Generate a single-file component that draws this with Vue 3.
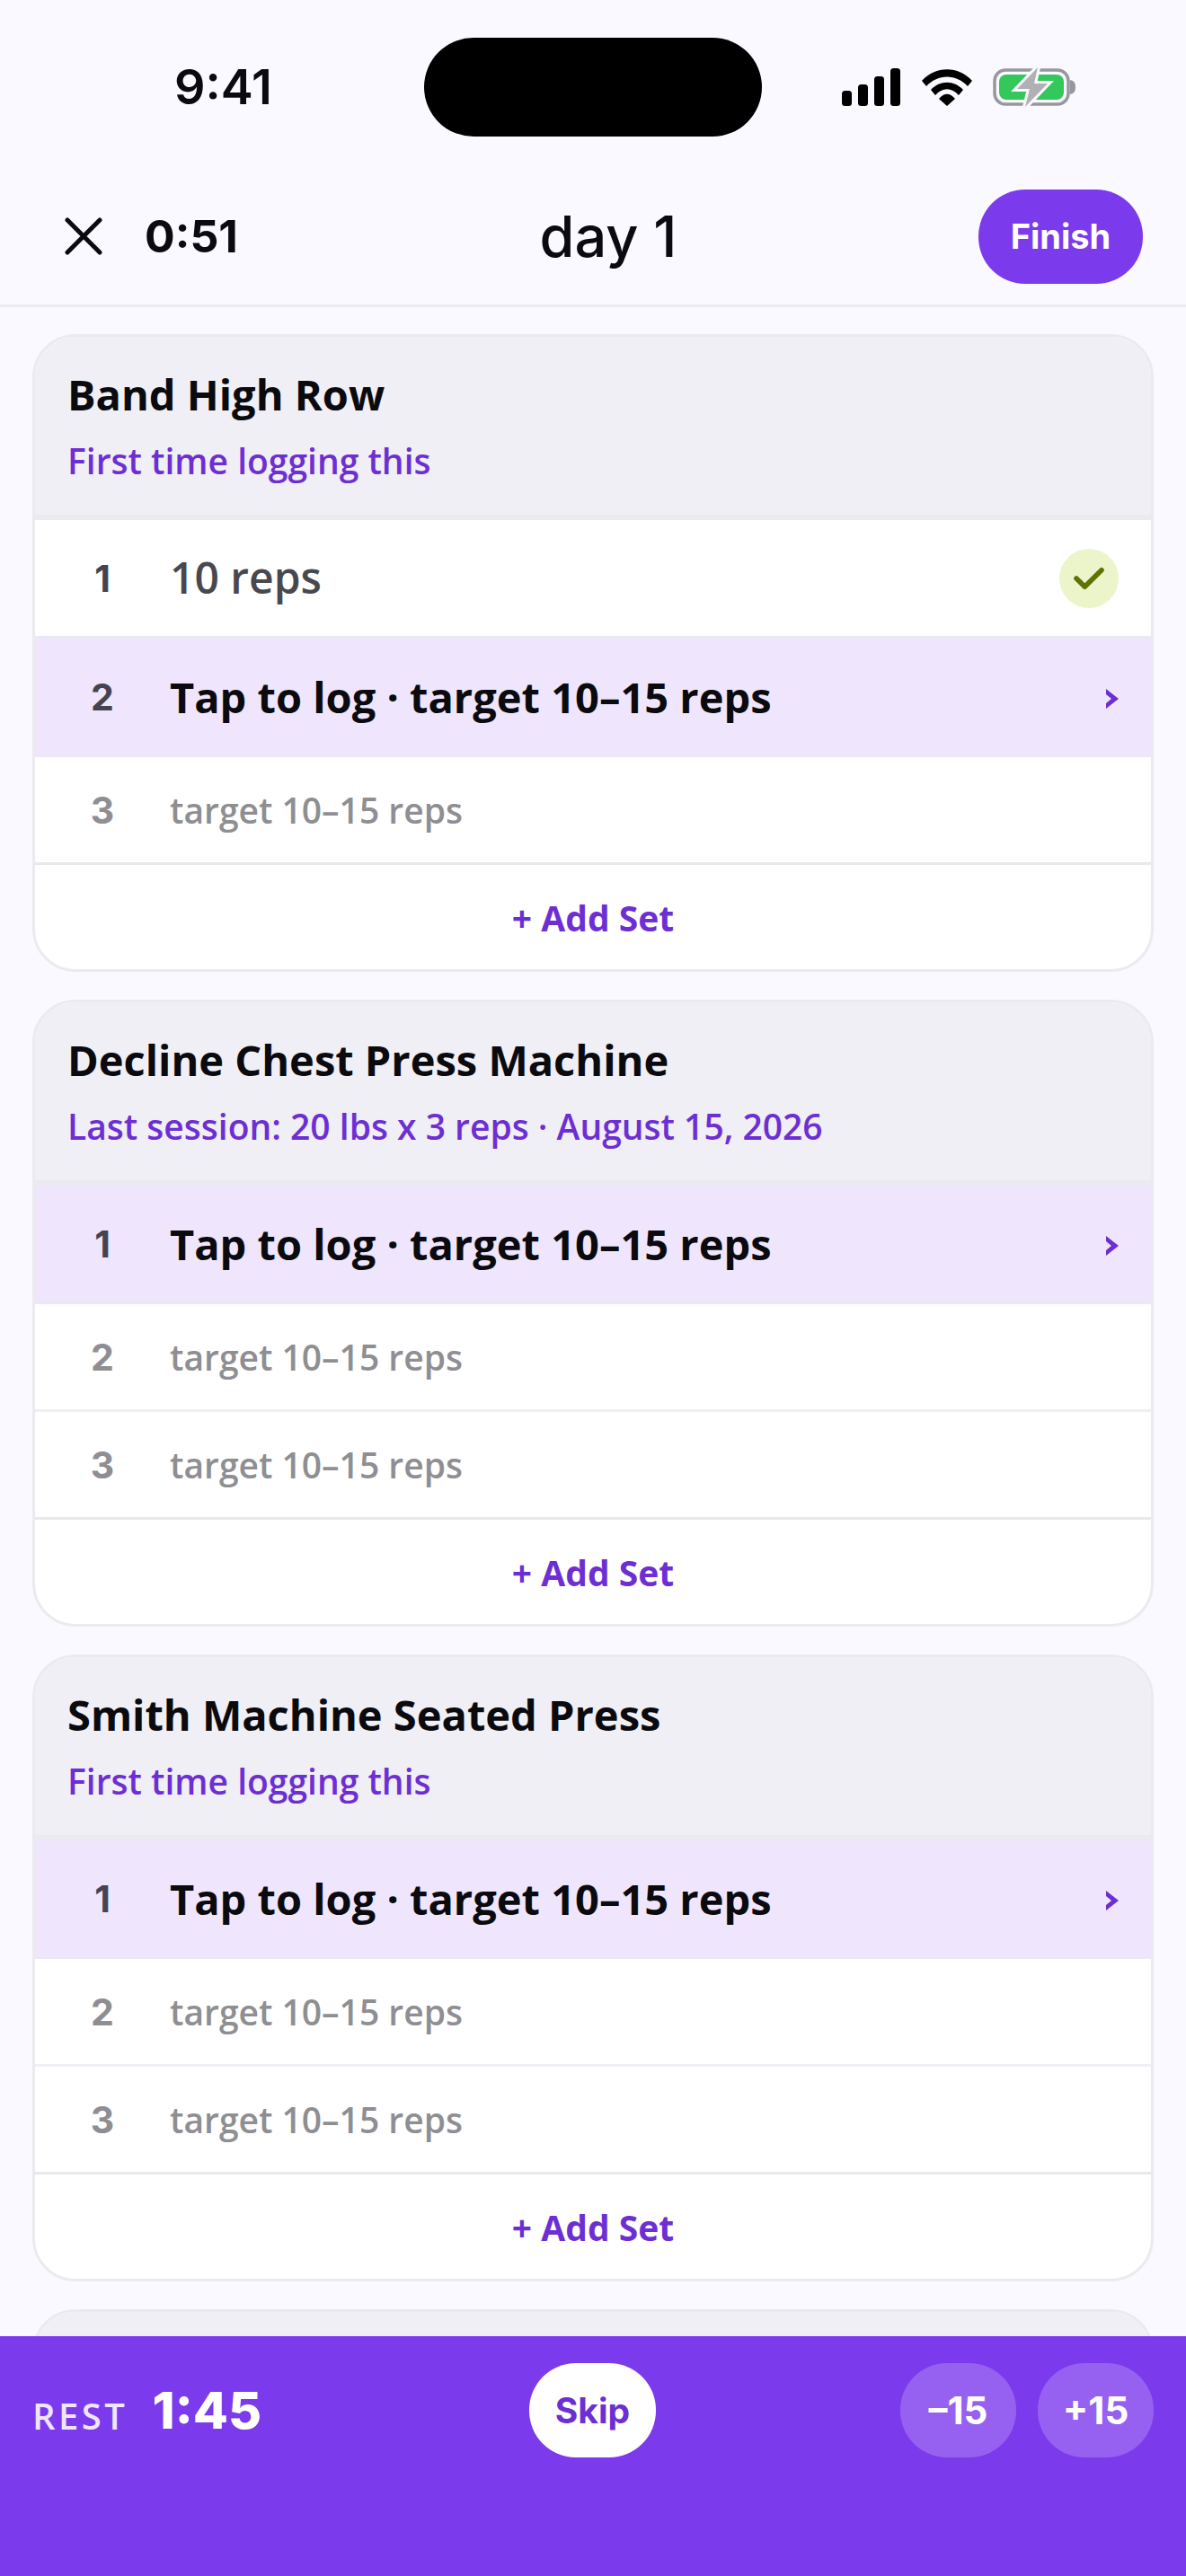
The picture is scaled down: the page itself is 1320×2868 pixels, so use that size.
<template>
  <div class="screen">
    <!-- status bar -->
    <div class="status">
      <span class="clock">9:41</span>
      <div class="island"></div>
      <div class="status-icons">
        <svg width="66" height="42" viewBox="0 0 66 42">
          <rect x="0" y="25" width="11" height="17" rx="3.5" />
          <rect x="18" y="18" width="11" height="24" rx="3.5" />
          <rect x="36" y="9" width="11" height="33" rx="3.5" />
          <rect x="54" y="0" width="11" height="42" rx="3.5" />
        </svg>
        <svg width="58" height="42" viewBox="0 0 58 42">
          <path d="M1 14 C16 -3 42 -3 57 14 L52 20 C39 6 19 6 6 20 Z" />
          <path d="M11 24 C21 13 37 13 47 24 L42 30 C34 21 24 21 16 30 Z" />
          <path d="M20 34 C26 27 32 27 38 34 L29 42 Z" />
        </svg>
        <svg width="94" height="46" viewBox="0 0 94 46">
          <rect x="2" y="4" width="82" height="38" rx="12" fill="none" stroke="#98989c" stroke-width="3.5" />
          <rect x="7" y="9" width="72" height="28" rx="8" fill="#34c759" />
          <path d="M86 15 C91 16 92 19 92 23 C92 27 91 30 86 31 Z" fill="#98989c" />
          <path d="M50 1 L27 25 L41 25 L36 45 L61 19 L46 19 Z" fill="#b1b1b5" stroke="#f9f9ff" stroke-width="6" paint-order="stroke" />
        </svg>
      </div>
    </div>

    <!-- workout header -->
    <header class="top">
      <div class="top-left">
        <svg class="close" width="44" height="44" viewBox="0 0 44 44">
          <path d="M4 4 L40 40 M40 4 L4 40" />
        </svg>
        <span class="elapsed">0:51</span>
      </div>
      <h1 class="title">day 1</h1>
      <button class="finish">Finish</button>
    </header>

    <main class="list">
      <section v-for="ex in exercises" :key="ex.name" class="card">
        <div class="card-head">
          <div class="ex-name">{{ ex.name }}</div>
          <div class="ex-note">{{ ex.note }}</div>
        </div>
        <template v-if="ex.sets">
          <div v-for="(s, i) in ex.sets" :key="i" class="row" :class="s">
            <span class="num">{{ i + 1 }}</span>
            <template v-if="s === 'done'">
              <span class="text">10 reps</span>
              <span class="check">
                <svg width="34" height="28" viewBox="0 0 36 30">
                  <path d="M3 15 L13 25 L33 5" />
                </svg>
              </span>
            </template>
            <template v-else-if="s === 'active'">
              <span class="text">Tap to log · target 10–15 reps</span>
              <svg class="chev" width="14" height="22" viewBox="0 0 14 22">
                <path d="M0 0 L14 11 L0 22 L0 16 L6 11 L0 6 Z" />
              </svg>
            </template>
            <span v-else class="text">target 10–15 reps</span>
          </div>
          <div class="add">+ Add Set</div>
        </template>
      </section>
    </main>

    <!-- rest timer -->
    <footer class="rest">
      <div class="rest-left">
        <span class="rest-label">REST</span>
        <span class="rest-time">1:45</span>
      </div>
      <button class="skip">Skip</button>
      <div class="rest-adjust">
        <button class="adj">–15</button>
        <button class="adj">+15</button>
      </div>
    </footer>
  </div>
</template>

<script setup>
const exercises = [
  { name: 'Band High Row', note: 'First time logging this', sets: ['done', 'active', 'todo'] },
  {
    name: 'Decline Chest Press Machine',
    note: 'Last session: 20 lbs x 3 reps · August 15, 2026',
    sets: ['active', 'todo', 'todo'],
  },
  { name: 'Smith Machine Seated Press', note: 'First time logging this', sets: ['active', 'todo', 'todo'] },
  { name: '', note: '' },
]
</script>

<style scoped>
.screen {
  width: 1320px;
  height: 2868px;
  display: flex;
  flex-direction: column;
  overflow: hidden;
  background: #f9f9ff;
  color: #0b0b0f;
  font-family: "Open Sans", Inter, sans-serif;
}
.status {
  height: 194px;
  flex: none;
  position: relative;
}
.clock {
  position: absolute;
  left: 194px;
  top: 67px;
  font-size: 54px;
  line-height: 60px;
  font-weight: 600;
  font-family: Inter, sans-serif;
}
.island {
  position: absolute;
  left: 472px;
  top: 42px;
  width: 376px;
  height: 110px;
  border-radius: 55px;
  background: #000;
}
.status-icons {
  position: absolute;
  left: 937px;
  top: 74px;
  display: flex;
  align-items: center;
  gap: 22px;
}
.status-icons svg {
  display: block;
}
.top {
  height: 148px;
  flex: none;
  display: flex;
  align-items: center;
  justify-content: space-between;
  padding: 0 48px 7px 71px;
  border-bottom: 3px solid #ebebf0;
  box-sizing: border-box;
}
.top-left {
  display: flex;
  align-items: center;
  gap: 46px;
}
.close {
  display: block;
}
.close path {
  stroke: #0b0b0f;
  stroke-width: 5;
  stroke-linecap: round;
  fill: none;
}
.elapsed {
  font-size: 50px;
  font-weight: 700;
  font-family: Inter, sans-serif;
}
.title {
  margin: 0;
  font-size: 63px;
  line-height: 70px;
  font-weight: 500;
  font-family: Inter, sans-serif;
}
.finish {
  width: 183px;
  height: 105px;
  border: none;
  border-radius: 52px;
  background: #7c3aed;
  color: #fff;
  font: 700 38px Inter, sans-serif;
  padding: 0;
}
.list {
  flex: 1;
  min-height: 0;
  overflow: hidden;
  padding: 30px 36px 0;
  display: flex;
  flex-direction: column;
  gap: 31px;
}
.card {
  flex: none;
  border: 3px solid #ebebef;
  border-radius: 48px;
  background: #fff;
  overflow: hidden;
}
.card-head {
  background: #f0eff5;
  padding: 34px 36px 0;
  height: 204px;
  box-sizing: border-box;
  border-bottom: 6px solid #ebebef;
}
.ex-name {
  font-size: 47px;
  line-height: 60px;
  font-weight: 700;
}
.ex-note {
  margin-top: 18px;
  font-size: 39px;
  line-height: 52px;
  font-weight: 600;
  color: #6d2ed3;
}
.row {
  display: flex;
  align-items: center;
  padding: 0 36px 0 0;
  box-sizing: border-box;
  border-bottom: 3px solid #f0eff5;
}
.num {
  width: 150px;
  flex: none;
  text-align: center;
  font-family: Inter, sans-serif;
  font-size: 41px;
  font-weight: 700;
  color: #8e8e93;
}
.text {
  flex: 1;
}
.row.done {
  height: 132px;
  border-bottom-color: #ebe8f5;
}
.row.done .num,
.row.active .num {
  color: #45434f;
}
.row.done .text {
  font-size: 48px;
  font-weight: 600;
  color: #48484e;
  margin-top: -3px;
}
.check {
  width: 66px;
  height: 66px;
  border-radius: 50%;
  background: #ecf5c9;
  display: flex;
  align-items: center;
  justify-content: center;
}
.check path {
  stroke: #5e7306;
  stroke-width: 6;
  fill: none;
  stroke-linecap: round;
  stroke-linejoin: round;
}
.row.active {
  height: 132px;
  background: #efe6fd;
  border-bottom-color: #ebe8f5;
}
.row.active .text {
  font-size: 47px;
  font-weight: 700;
}
.chev {
  fill: #6d2ed3;
  margin-top: 5px;
}
.row.todo {
  height: 120px;
}
.row.todo .text {
  font-size: 39px;
  font-weight: 600;
  color: #8e8e93;
}
.row.todo:nth-last-child(2) {
  border-bottom-color: #e8e8ed;
}
.add {
  height: 116px;
  display: flex;
  align-items: center;
  justify-content: center;
  font-size: 39px;
  font-weight: 700;
  color: #6d2ed3;
}
.rest {
  position: relative;
  flex: none;
  height: 267px;
  background: #7c3aed;
  display: flex;
  align-items: flex-start;
  justify-content: space-between;
  padding: 30px 36px 0;
  box-sizing: border-box;
  color: #fff;
}
.rest-left {
  height: 105px;
  display: flex;
  align-items: center;
  gap: 27px;
}
.rest-label {
  font-size: 40px;
  font-weight: 600;
  letter-spacing: 3.5px;
  color: #efe6fd;
  margin-top: 12px;
}
.rest-time {
  font-size: 57px;
  font-weight: 800;
  font-family: Inter, sans-serif;
}
.skip {
  position: absolute;
  left: 589px;
  top: 30px;
  width: 141px;
  height: 105px;
  border: none;
  border-radius: 52px;
  background: #fff;
  color: #6d2ed3;
  font: 700 39px Inter, sans-serif;
  padding: 0;
}
.rest-adjust {
  display: flex;
  gap: 24px;
}
.adj {
  width: 129px;
  height: 105px;
  border: none;
  border-radius: 52px;
  background: rgba(255, 255, 255, 0.2);
  color: #fff;
  font: 700 42px Inter, sans-serif;
  padding: 0;
}
</style>
